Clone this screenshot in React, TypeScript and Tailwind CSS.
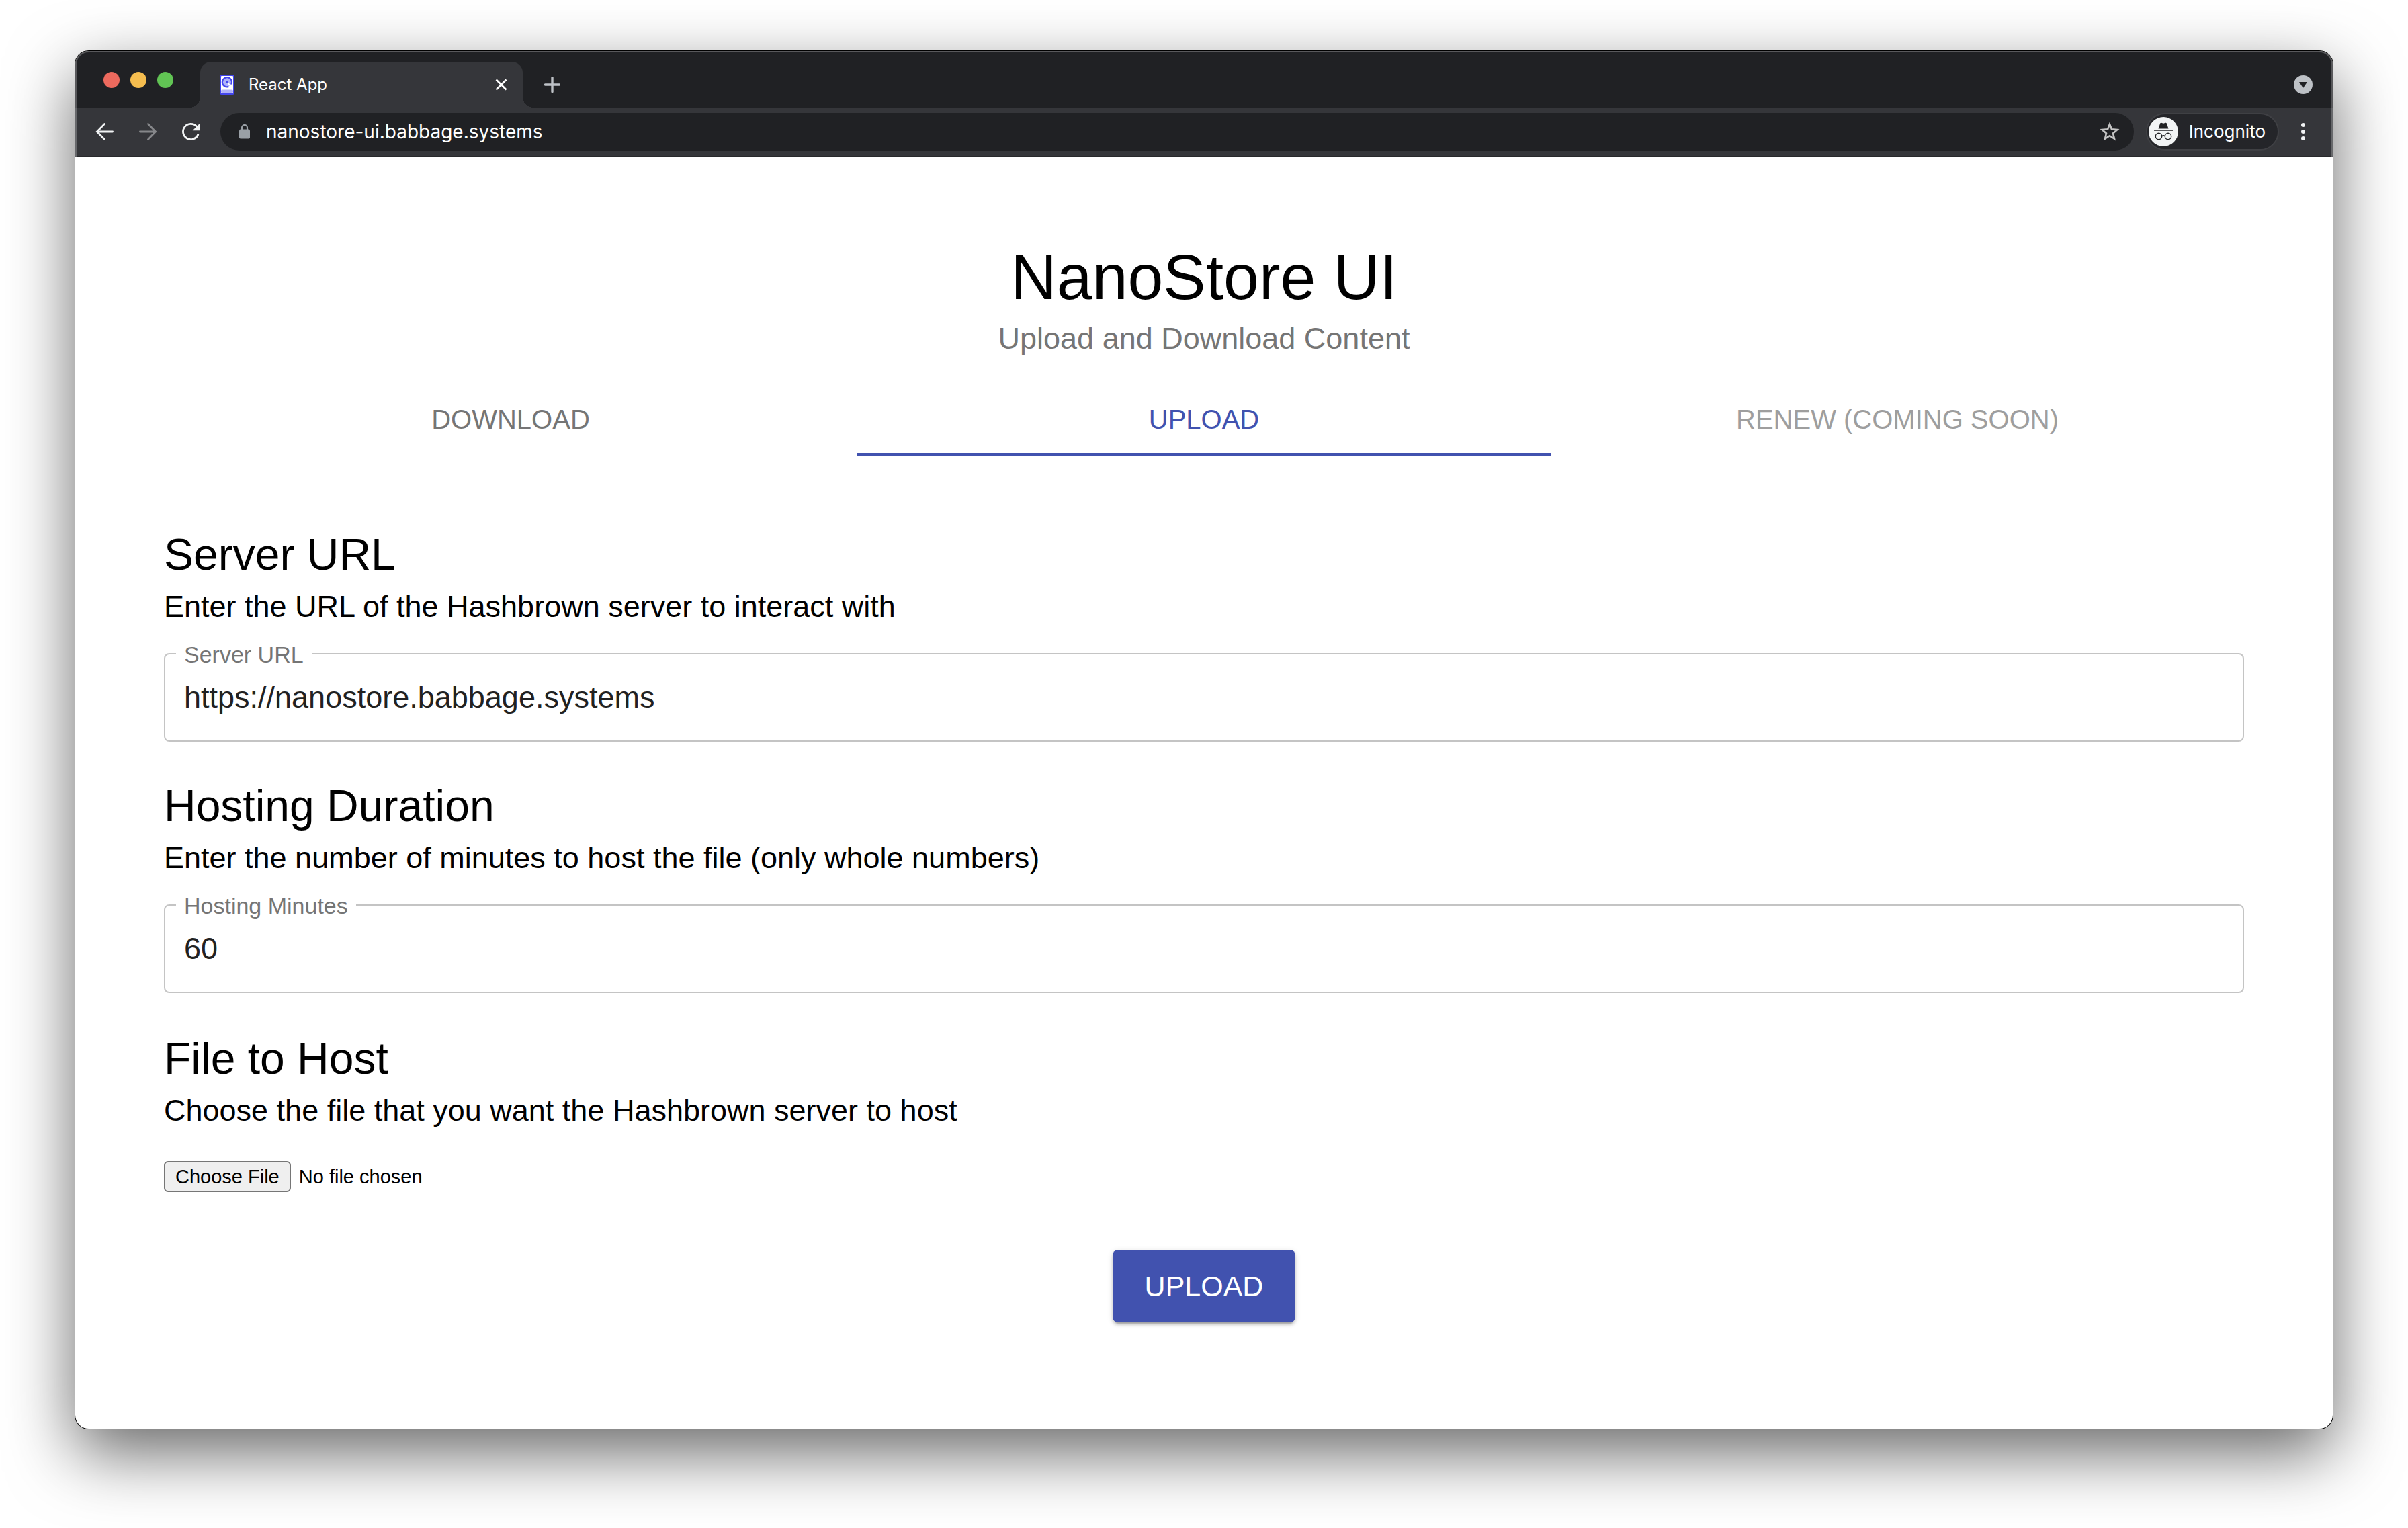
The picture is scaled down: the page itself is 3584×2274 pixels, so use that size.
import React, { useState } from "react";

const barText = "font-['Inter','Roboto',sans-serif]";

function DriveIcon() {
  return (
    <svg viewBox="0 0 24 32" className="h-8 w-6 shrink-0" aria-hidden="true">
      <rect x="2" y="2" width="20" height="28" rx="2" fill="#fff" stroke="#4346ee" strokeWidth="2" />
      <rect x="3" y="23.4" width="18" height="5.2" rx="2" fill="#b0b2f8" />
      <circle cx="12" cy="12.2" r="6.8" fill="#b0b2f8" />
      <path d="M13.6 14.2 18.6 19" stroke="#fff" strokeWidth="1.8" />
      <path d="M18.3 15.4A7.1 7.1 0 1 0 14.4 18.9" fill="none" stroke="#4346ee" strokeWidth="2.2" />
      <circle cx="12" cy="12.2" r="1.6" fill="#4346ee" />
    </svg>
  );
}

function IncognitoIcon() {
  return (
    <svg viewBox="0 0 44 44" className="size-11 shrink-0" aria-hidden="true">
      <circle cx="22" cy="22" r="22" fill="#f1f3f4" />
      <path d="M14.5 17.4 17.2 9.6Q17.7 8.3 19 8.8L22 9.7 25 8.8Q26.3 8.3 26.8 9.6L29.5 17.4Z" fill="#202124" />
      <path d="M8 20H36" stroke="#202124" strokeWidth="1.6" />
      <circle cx="15" cy="29" r="4.7" fill="none" stroke="#202124" strokeWidth="1.4" />
      <circle cx="29" cy="29" r="4.7" fill="none" stroke="#202124" strokeWidth="1.4" />
      <path d="M19.7 28.6Q22 27.2 24.3 28.6" fill="none" stroke="#202124" strokeWidth="1.6" />
    </svg>
  );
}

function TabStrip() {
  return (
    <div className="flex h-[84px] items-end bg-[#202124]">
      <div className="flex gap-4 self-center pl-[42px] pr-10 pt-0.5">
        <button aria-label="Close window" className="size-6 rounded-full bg-[#ed6a5e]" />
        <button aria-label="Minimize window" className="size-6 rounded-full bg-[#f5bd4f]" />
        <button aria-label="Zoom window" className="size-6 rounded-full bg-[#61c454]" />
      </div>
      <div className="flex h-[68px] items-end">
        <span className="-ml-4 size-4 bg-[radial-gradient(circle_at_0_0,#202124_16px,#35363a_16px)]" />
        <div className="flex h-full w-[480px] items-center rounded-t-2xl bg-[#35363a] pl-7 pr-5">
          <DriveIcon />
          <span className={"flex-1 pl-5 text-[24px] leading-8 text-white " + barText}>React App</span>
          <button aria-label="Close tab" className="flex size-6 items-center justify-center">
            <svg viewBox="0 0 24 24" className="size-6" aria-hidden="true">
              <path d="M4.5 4.5 19.5 19.5M19.5 4.5 4.5 19.5" stroke="#fff" strokeWidth="2.6" />
            </svg>
          </button>
        </div>
        <span className="size-4 bg-[radial-gradient(circle_at_100%_0,#202124_16px,#35363a_16px)]" />
      </div>
      <button aria-label="New tab" className="ml-4 flex h-[68px] items-center">
        <svg viewBox="0 0 24 24" className="size-6" aria-hidden="true">
          <path d="M12 1.5V22.5M1.5 12H22.5" stroke="#bdc1c6" strokeWidth="3.4" strokeLinecap="round" />
        </svg>
      </button>
      <button aria-label="Search tabs" className="ml-auto mr-[30px] flex h-[68px] items-center">
        <svg viewBox="0 0 28 28" className="size-7" aria-hidden="true">
          <circle cx="14" cy="14" r="14" fill="#bdc1c6" />
          <path d="M8 10H20L14 19Z" fill="#202124" />
        </svg>
      </button>
    </div>
  );
}

function Toolbar() {
  return (
    <div className="flex h-[74px] items-center border-b-2 border-[#28292c] bg-[#35363a] pl-7">
      <button aria-label="Back" className="mr-8">
        <svg
          viewBox="0 0 32 32"
          className="size-8"
          fill="none"
          stroke="#f1f3f4"
          strokeWidth="2.8"
          strokeLinecap="round"
          aria-hidden="true"
        >
          <path d="M27.6 16H5M15.6 4.4 4.4 16 15.6 27.6" />
        </svg>
      </button>
      <button aria-label="Forward" className="mr-8">
        <svg
          viewBox="0 0 32 32"
          className="size-8"
          fill="none"
          stroke="#86878a"
          strokeWidth="2.8"
          strokeLinecap="round"
          aria-hidden="true"
        >
          <path d="M4.4 16H27M16.4 4.4 27.6 16 16.4 27.6" />
        </svg>
      </button>
      <button aria-label="Reload" className="mr-7">
        <svg viewBox="0 0 32 32" className="size-8" aria-hidden="true">
          <path
            d="M26.8 20.4A11.6 11.6 0 1 1 24.5 8"
            fill="none"
            stroke="#f1f3f4"
            strokeWidth="2.8"
            strokeLinecap="round"
          />
          <path d="M30 3V14.3H18.7Z" fill="#f1f3f4" />
        </svg>
      </button>
      <div className="flex h-14 flex-1 items-center rounded-full bg-[#202124] pl-7 pr-5">
        <svg viewBox="0 0 16 22" className="h-[22px] w-4 shrink-0" aria-hidden="true">
          <rect y="7.5" width="16" height="14" rx="2" fill="#9aa0a6" />
          <path d="M4 9V5A4 4 0 0 1 12 5V9" fill="none" stroke="#9aa0a6" strokeWidth="2.2" />
        </svg>
        <input
          aria-label="Address"
          defaultValue="nanostore-ui.babbage.systems"
          className={"min-w-0 flex-1 bg-transparent pl-6 text-[28px] leading-9 text-white outline-none " + barText}
        />
        <button aria-label="Bookmark this page">
          <svg viewBox="0 0 32 32" className="size-8" fill="none" stroke="#c4c4c4" strokeWidth="2.6" aria-hidden="true">
            <path d="M16 4.8 19 12.4 27.3 13 21 18.4 23 26.6 16 22.2 9 26.6 11 18.4 4.7 13 13 12.4Z" />
          </svg>
        </button>
      </div>
      <button className="ml-[18px] flex h-14 items-center rounded-full border-2 border-[#3f4044] bg-[#242529] pl-0.5 pr-[18px]">
        <IncognitoIcon />
        <span className={"pl-4 text-[26px] leading-8 text-white " + barText}>Incognito</span>
      </button>
      <button aria-label="Menu" className="ml-5 mr-7">
        <svg viewBox="0 0 32 32" className="size-8" fill="#f1f3f4" aria-hidden="true">
          <circle cx="16" cy="6" r="3" />
          <circle cx="16" cy="16" r="3" />
          <circle cx="16" cy="26" r="3" />
        </svg>
      </button>
    </div>
  );
}

function OutlinedField(props: { id: string; label: string; value: string; mode?: "url" | "numeric" }) {
  const [value, setValue] = useState(props.value);
  return (
    <div className="relative mt-[34px] rounded-lg border-2 border-[#c4c4c4]">
      <label
        htmlFor={props.id}
        className="absolute -top-[18px] left-4 bg-white px-3 text-[34px] leading-9 text-[#757575]"
      >
        {props.label}
      </label>
      <input
        id={props.id}
        inputMode={props.mode}
        value={value}
        onChange={(e) => setValue(e.target.value)}
        className="block h-32 w-full bg-transparent px-7 text-[45px] leading-[52px] text-[#212121] outline-none"
      />
    </div>
  );
}

function Heading(props: { title: string; text: string }) {
  return (
    <>
      <h2 className="text-[66px] leading-[86px]">{props.title}</h2>
      <p className="text-[45px] leading-[70px]">{props.text}</p>
    </>
  );
}

const tabs = [
  { name: "DOWNLOAD", style: "border-transparent text-[#757575]" },
  { name: "UPLOAD", style: "border-[#4152af] text-[#4152af]" },
  { name: "RENEW (COMING SOON)", style: "border-transparent text-[#9e9e9e]", disabled: true },
];

export default function App() {
  return (
    <div className="min-h-screen bg-white px-28 pb-[148px] pt-[76px] font-['Liberation_Sans',Arial,sans-serif] text-black">
      <div className="overflow-hidden rounded-[20px] bg-white shadow-[0_0_0_1px_#000,0_36px_100px_rgba(0,0,0,0.6)]">
        <header className="relative">
          <TabStrip />
          <Toolbar />
          <div className="pointer-events-none absolute inset-0 rounded-t-[20px] border-x-2 border-t-2 border-white/25" />
        </header>
        <main className="px-[132px] pb-[158px] pt-[122px]">
          <h1 className="text-center text-[95px] leading-[112px]">NanoStore UI</h1>
          <p className="text-center text-[45px] leading-[72px] text-[#757575]">Upload and Download Content</p>
          <nav role="tablist" className="mt-[42px] grid grid-cols-3">
            {tabs.map((tab) => (
              <button
                key={tab.name}
                role="tab"
                aria-selected={tab.name === "UPLOAD"}
                disabled={tab.disabled}
                className={"h-24 border-b-4 pb-2 text-[40px] leading-[48px] " + tab.style}
              >
                {tab.name}
              </button>
            ))}
          </nav>
          <section className="pt-[104px]">
            <Heading title="Server URL" text="Enter the URL of the Hashbrown server to interact with" />
            <OutlinedField id="server" label="Server URL" value="https://nanostore.babbage.systems" mode="url" />
          </section>
          <section className="pt-[52px]">
            <Heading title="Hosting Duration" text="Enter the number of minutes to host the file (only whole numbers)" />
            <OutlinedField id="minutes" label="Hosting Minutes" value="60" mode="numeric" />
          </section>
          <section className="pt-[54px]">
            <Heading title="File to Host" text="Choose the file that you want the Hashbrown server to host" />
            <input
              type="file"
              aria-label="File to host"
              className="mt-10 block w-full text-[29px] leading-[42px] file:mr-3 file:rounded-md file:border-2 file:border-solid file:border-[#767676] file:bg-[#efefef] file:px-[15px] file:text-[29px] file:leading-[42px] file:text-black"
            />
          </section>
          <div className="flex justify-center pt-[86px]">
            <button className="rounded-lg bg-[#4152af] px-12 py-7 text-[43px] leading-[52px] text-white shadow-[0_6px_2px_-4px_rgba(0,0,0,0.2),0_4px_4px_0_rgba(0,0,0,0.14),0_2px_10px_0_rgba(0,0,0,0.12)]">
              UPLOAD
            </button>
          </div>
        </main>
      </div>
    </div>
  );
}
